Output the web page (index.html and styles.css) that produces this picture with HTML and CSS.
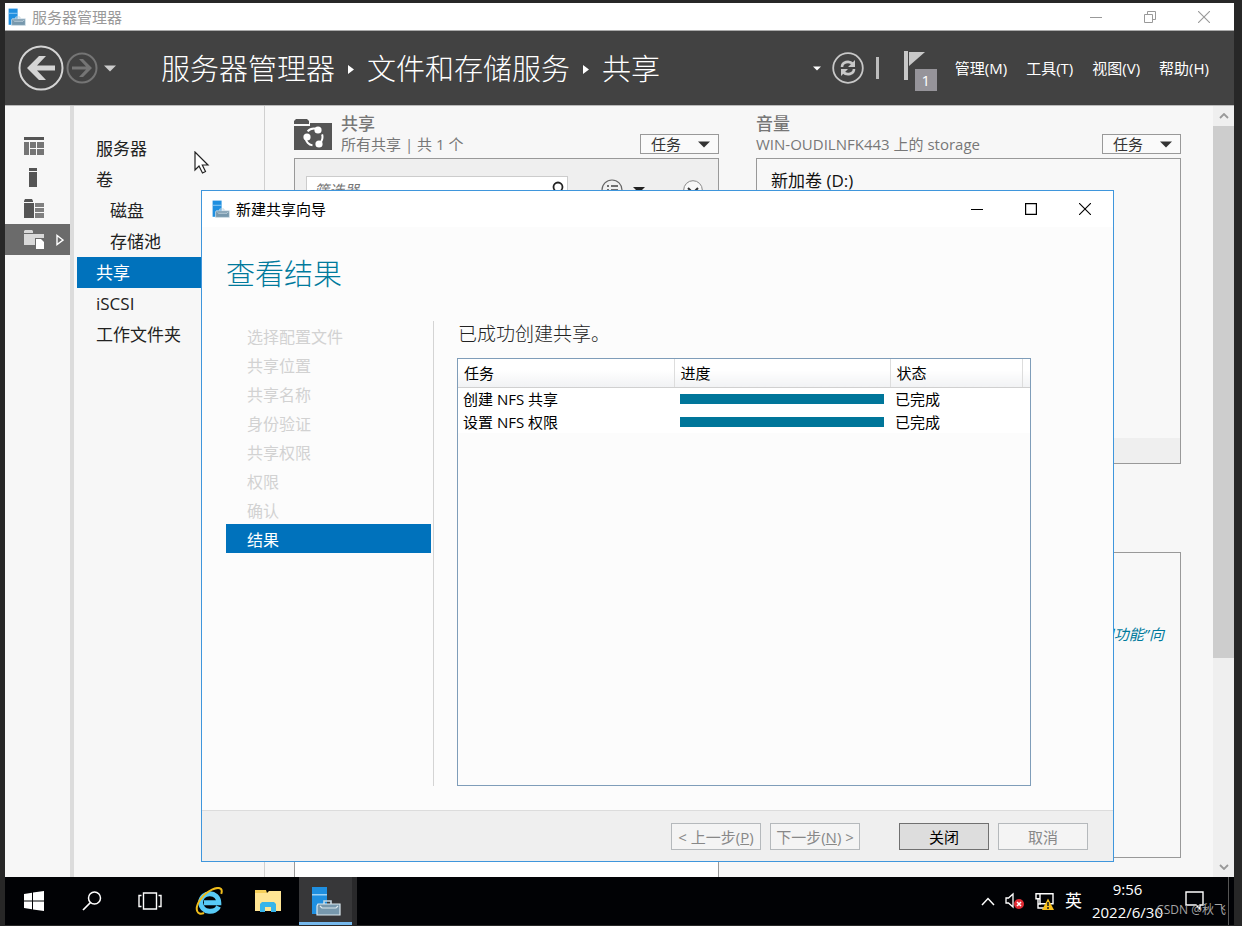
FILE: index.html
```html
<!DOCTYPE html>
<html lang="zh-CN">
<head>
<meta charset="utf-8">
<title>服务器管理器</title>
<link rel="stylesheet" href="styles.css">
</head>
<body>
<svg class="defs" aria-hidden="true">
  <symbol id="server" viewBox="0 0 30 30">
    <path fill="#1f8fe0" d="M1 1h15v27H1z"/>
    <path fill="#9bd0f5" d="M1 8h15v1.500H1z"/>
    <path fill="none" stroke="#c5d6e0" stroke-width="1.600" d="M13 18v-3h7v3"/>
    <path fill="#7798ad" stroke="#dbe7ee" stroke-width="1.200" d="M7 18h22v11H6V20z"/>
    <path fill="none" stroke="#dbe7ee" stroke-width="1.200" d="M9 20l2 2h14l2-2"/>
  </symbol>
  <symbol id="close" viewBox="0 0 12 12"><path fill="none" stroke="currentColor" stroke-width="1.100" d="M0 0l12 12M12 0L0 12"/></symbol>
  <symbol id="minimize" viewBox="0 0 12 12"><path fill="none" stroke="currentColor" d="M0 6.500h12"/></symbol>
  <symbol id="caret" viewBox="0 0 12 6"><path fill="currentColor" d="M0 0h12L6 6z"/></symbol>
</svg>
<div class="screen">
  <header class="titlebar">
    <svg class="app-icon"><use href="#server"/></svg>
    <span class="titlebar-text">服务器管理器</span>
    <div class="window-buttons">
      <button aria-label="最小化"><svg><use href="#minimize"/></svg></button>
      <button aria-label="还原"><svg viewBox="0 0 12 12"><path fill="none" stroke="currentColor" d="M.5 3.500h8v8h-8zM3.500 3V.5h8v8H9"/></svg></button>
      <button aria-label="关闭窗口"><svg><use href="#close"/></svg></button>
    </div>
  </header>

  <div class="banner">
    <button class="back" aria-label="后退"><svg viewBox="0 0 46 46"><circle cx="23" cy="23" r="21.500" fill="none" stroke="#d4d4d4" stroke-width="2"/><path fill="#d4d4d4" d="M9 23L21 11h7l-9 9.500h18v5H19l9 9.500h-7z"/></svg></button>
    <button class="forward" aria-label="前进"><svg viewBox="0 0 32 32"><circle cx="16" cy="16" r="14.500" fill="none" stroke="#757575" stroke-width="2"/><path fill="#757575" d="M26 16l-9 9h-4l7-7.500H6v-3h14L13 7h4z"/></svg></button>
    <button class="history" aria-label="历史记录"><svg><use href="#caret"/></svg></button>
    <nav class="crumbs">
      <a href="#">服务器管理器</a>
      <svg viewBox="0 0 6 9"><path fill="#fff" d="M0 0l6 4.500L0 9z"/></svg>
      <a href="#">文件和存储服务</a>
      <svg viewBox="0 0 6 9"><path fill="#fff" d="M0 0l6 4.500L0 9z"/></svg>
      <a href="#">共享</a>
    </nav>
    <button class="more" aria-label="更多"><svg><use href="#caret"/></svg></button>
    <button class="refresh" aria-label="刷新"><svg viewBox="0 0 32 32"><circle cx="16" cy="16" r="14.800" fill="none" stroke="#c8c8c8" stroke-width="1.800"/><path fill="none" stroke="#c8c8c8" stroke-width="2.600" d="M10 15c0-5 7-7 11-3M22 17c0 5-7 7-11 3"/><path fill="#c8c8c8" d="M23 8v7h-7zM9 24v-7h7z"/></svg></button>
    <span class="bar"></span>
    <button class="flag" aria-label="通知"><svg viewBox="0 0 22 30"><path fill="#c8c8c8" d="M0 0h4v29H0zM5 1h16L5 15z"/></svg><span class="badge">1</span></button>
    <div class="menus">
      <button>管理(M)</button>
      <button>工具(T)</button>
      <button>视图(V)</button>
      <button>帮助(H)</button>
    </div>
  </div>

  <div class="workspace">
    <div class="rail">
      <button aria-label="仪表板"><svg viewBox="0 0 20 20"><path fill="#555" d="M0 0h20v3H0z"/><path fill="#757575" d="M0 5h5v13H0zM6 5h6v6H6zM13 5h7v6h-7zM6 12h6v6H6zM13 12h7v6h-7z"/></svg></button>
      <button aria-label="本地服务器"><svg viewBox="0 0 20 20"><path fill="#555" d="M5 0h8v3H5zM5 4h8v15H5z"/></svg></button>
      <button aria-label="所有服务器"><svg viewBox="0 0 20 20"><path fill="#555" d="M0 2l1-2h7l1 2v1H0zM0 4h10v15H0z"/><path fill="#808080" d="M11 4h9v4h-9zM11 9h9v4h-9zM11 14h9v5h-9z"/></svg></button>
      <button class="active" aria-label="文件和存储服务"><svg viewBox="0 0 20 20"><path fill="#d9d9d9" d="M0 3V1l1-1h7l1 1v2zM0 4h20v4h-9v7H0z"/><path fill="#fff" d="M12 9h5l3 3v7h-8z"/></svg><svg class="expand" viewBox="0 0 8 12"><path fill="none" stroke="#fff" stroke-width="1.400" d="M1 1.500v9L7 6z"/></svg></button>
    </div>
    <nav class="sidenav">
      <a href="#">服务器</a>
      <a href="#">卷</a>
      <a href="#" class="sub">磁盘</a>
      <a href="#" class="sub">存储池</a>
      <a href="#" class="current">共享</a>
      <a href="#">iSCSI</a>
      <a href="#">工作文件夹</a>
    </nav>
    <main class="tiles">
      <section class="tile">
        <div class="tile-head">
          <svg class="share-icon" viewBox="0 0 38 31"><path fill="#555" d="M0 5V2l2-2h11l2 2v3zM0 7h16V4h22v27H0z"/><g fill="none" stroke="#fff" stroke-width="2"><circle cx="20" cy="18" r="8.500" stroke-dasharray="11 6.800" stroke-dashoffset="3"/></g><g fill="#fff"><circle cx="24" cy="11" r="3.600"/><circle cx="13" cy="18" r="3.600"/><circle cx="25" cy="25" r="3.600"/></g></svg>
          <div class="tile-titles"><h2>共享</h2><p>所有共享 | 共 1 个</p></div>
          <button class="tasks">任务<svg><use href="#caret"/></svg></button>
        </div>
        <div class="tile-box list">
          <div class="filter">
            <label class="search"><input type="text" placeholder="筛选器" aria-label="筛选器"><svg viewBox="0 0 14 18"><circle cx="8" cy="6" r="4.500" fill="none" stroke="#222" stroke-width="1.800"/><path stroke="#222" stroke-width="2" d="M5 10l-4 6"/></svg></label>
            <button class="view" aria-label="视图"><svg viewBox="0 0 22 22"><circle cx="11" cy="11" r="10" fill="none" stroke="#666" stroke-width="1.200"/><path stroke="#444" stroke-width="1.500" d="M6 7h2m2 0h7M6 11h2m2 0h7M6 15h2m2 0h7"/></svg></button>
            <button class="view-more" aria-label="视图选项"><svg><use href="#caret"/></svg></button>
            <button class="collapse" aria-label="展开"><svg viewBox="0 0 20 20"><circle cx="10" cy="10" r="9.300" fill="#f8f8f8" stroke="#888"/><path fill="none" stroke="#333" stroke-width="2" d="M5 8l5 5 5-5"/></svg></button>
          </div>
        </div>
      </section>
      <div class="tile-column">
        <section class="tile">
          <div class="tile-head">
            <div class="tile-titles"><h2>音量</h2><p>WIN-OUDILNFK443 上的 storage</p></div>
            <button class="tasks">任务<svg><use href="#caret"/></svg></button>
          </div>
          <div class="tile-box volume"><h3>新加卷 (D:)</h3><div class="tile-foot"></div></div>
        </section>
        <section class="tile-box quota"><p>启动“添加角色和功能”向</p></section>
      </div>
    </main>
    <div class="scrollbar">
      <button aria-label="向上滚动"><svg viewBox="0 0 10 6"><path fill="none" stroke="#999" stroke-width="1.800" d="M1 5l4-4 4 4"/></svg></button>
      <div class="thumb"></div>
      <button class="down" aria-label="向下滚动"><svg viewBox="0 0 10 6"><path fill="none" stroke="#999" stroke-width="1.800" d="M1 1l4 4 4-4"/></svg></button>
    </div>
  </div>

  <div class="dialog" role="dialog" aria-labelledby="wizard-title">
    <div class="dialog-title">
      <svg class="app-icon"><use href="#server"/></svg>
      <span id="wizard-title">新建共享向导</span>
      <div class="window-buttons">
        <button aria-label="最小化"><svg><use href="#minimize"/></svg></button>
        <button aria-label="最大化"><svg viewBox="0 0 12 12"><path fill="none" stroke="currentColor" stroke-width="1.200" d="M.6.6h10.800v10.800H.6z"/></svg></button>
        <button aria-label="关闭窗口"><svg><use href="#close"/></svg></button>
      </div>
    </div>
    <h1>查看结果</h1>
    <div class="dialog-body">
      <ol class="steps">
        <li>选择配置文件</li>
        <li>共享位置</li>
        <li>共享名称</li>
        <li>身份验证</li>
        <li>共享权限</li>
        <li>权限</li>
        <li>确认</li>
        <li class="current">结果</li>
      </ol>
      <div class="result">
        <p>已成功创建共享。</p>
        <div class="grid">
          <table>
            <thead><tr><th>任务</th><th>进度</th><th>状态</th><th class="filler"></th></tr></thead>
            <tbody>
              <tr><td>创建 NFS 共享</td><td><progress value="100" max="100" aria-label="创建 NFS 共享"></progress></td><td colspan="2">已完成</td></tr>
              <tr><td>设置 NFS 权限</td><td><progress value="100" max="100" aria-label="设置 NFS 权限"></progress></td><td colspan="2">已完成</td></tr>
            </tbody>
          </table>
        </div>
      </div>
    </div>
    <div class="dialog-footer">
      <button disabled>&lt; 上一步(<u>P</u>)</button>
      <button disabled>下一步(<u>N</u>) &gt;</button>
      <button class="primary">关闭</button>
      <button disabled>取消</button>
    </div>
  </div>

  <svg class="cursor" viewBox="0 0 16 24"><path fill="#fff" stroke="#222" stroke-width="1.200" d="M1 1v18l4-4 3.500 7 3-1.500L8.300 14H14z"/></svg>

  <footer class="taskbar">
    <button aria-label="开始"><svg width="20" height="20" viewBox="0 0 20 20"><path fill="#fff" d="M0 3l8-1.200V9.500H0zM9 1.600L20 0v9.500H9zM0 10.500h8v7.700L0 17zM9 10.500h11V20L9 18.400z"/></svg></button>
    <button aria-label="搜索"><svg width="20" height="20" viewBox="0 0 20 20"><circle cx="12.500" cy="7" r="6" fill="none" stroke="#fff" stroke-width="1.500"/><path stroke="#fff" stroke-width="1.700" d="M8.500 11.500L1 19"/></svg></button>
    <button aria-label="任务视图"><svg width="24" height="18" viewBox="0 0 24 18"><path fill="none" stroke="#fff" stroke-width="1.400" d="M5.500 1h13v16h-13zM3.500 3.500H1v11h2.500M20.500 3.500H23v11h-2.500"/></svg></button>
    <button aria-label="Internet Explorer"><svg width="28" height="28" viewBox="0 0 28 28"><path fill="none" stroke="#58cbf7" stroke-width="5" d="M23.500 19.500C21 26 7 27 5.500 15.500 6.500 3.500 23.500 4 23.800 15.700H9"/><path fill="none" stroke="#f0bd1c" stroke-width="2" d="M9 26C2 29-1 22 5 13 12 3 23-1 26 2c1.200 1.300.8 3.200.2 4.800"/></svg></button>
    <button aria-label="文件资源管理器"><svg width="26" height="22" viewBox="0 0 26 22"><path fill="#f5cf5a" d="M0 0h11l1 3H0z"/><path fill="#ffe594" d="M0 3h12l2-2h12v20H0z"/><path fill="#38b5ea" d="M5 22v-8l2-2h12l2 2v8h-5v-5h-6v5z"/></svg></button>
    <button class="running" aria-label="服务器管理器"><svg width="30" height="30"><use href="#server"/></svg></button>
    <div class="tray">
      <svg width="14" height="9" viewBox="0 0 14 9"><path fill="none" stroke="#fff" stroke-width="1.500" d="M1 8l6-6.500L13 8"/></svg>
      <svg width="20" height="18" viewBox="0 0 20 18"><path fill="none" stroke="#fff" stroke-width="1.300" d="M1 6h2.500L8 2v13l-4.500-4H1z"/><circle cx="14" cy="12" r="5" fill="#e02b34"/><path stroke="#fff" stroke-width="1.500" d="M12 10l4 4m0-4l-4 4"/></svg>
      <svg width="20" height="18" viewBox="0 0 20 18"><path fill="none" stroke="#fff" stroke-width="1.400" d="M5 1.700h13v10H5zM1 1.700h4v5H1zM3 7v9h6M3 12h3"/><path fill="#f8c01c" d="M13 6.500L19 18H7z"/><path stroke="#222" stroke-width="1.600" d="M13 10v4m0 1v2"/></svg>
      <span class="ime">英</span>
      <div class="clock"><time>9:56</time><time>2022/6/30</time></div>
      <svg width="20" height="20" viewBox="0 0 20 20"><path fill="none" stroke="#fff" stroke-width="1.400" d="M1 1h17v13h-3v4l-4-4H1z"/></svg>
    </div>
    <span class="watermark">CSDN @秋飞</span>
  </footer>
</div>
</body>
</html>
```
FILE: styles.css
```css
* { box-sizing: border-box; }

body {
  margin: 0;
  background: #272727;
  font-family: "Open Sans", "Noto Sans CJK SC", sans-serif;
  font-size: 15px;
  line-height: 20px;
  color: #222;
}

button {
  margin: 0;
  padding: 0;
  border: 0;
  background: none;
  color: inherit;
  font: inherit;
}

a { color: inherit; text-decoration: none; }
h1, h2, h3, p, ol { margin: 0; padding: 0; font-weight: 400; }
svg { display: block; flex: none; }
.defs { width: 0; height: 0; position: absolute; }

.screen {
  position: relative;
  display: flex;
  flex-direction: column;
  height: 100vh;
  padding: 3px 8px 1px 5px;
  overflow: hidden;
}

/* Window title bars */
.titlebar, .dialog-title { display: flex; align-items: center; background: #fff; }
.titlebar { height: 28px; padding: 0 24px 0 3px; border-bottom: 1px solid #aaa; color: #999; flex: none; }
.app-icon { width: 18px; height: 18px; margin-right: 6px; }
.window-buttons { display: flex; gap: 42px; margin-left: auto; }
.window-buttons svg { width: 12px; height: 12px; }

/* Dark banner */
.banner {
  display: flex;
  align-items: center;
  flex: none;
  height: 75px;
  padding: 0 25px 0 13px;
  border-bottom: 1px solid #bbb;
  background: #424242;
  color: #fff;
}
.back svg { width: 46px; height: 46px; }
.forward { margin-left: 2px; }
.forward svg, .refresh svg { width: 32px; height: 32px; }
.history { margin-left: 6px; color: #ccc; }
.history svg { width: 12px; height: 7px; }
.crumbs { display: flex; align-items: center; gap: 13px; margin-left: 45px; padding-top: 2px; font-size: 29px; line-height: 40px; font-weight: 300; white-space: nowrap; }
.crumbs svg { width: 6px; height: 9px; }
.more { margin-left: auto; }
.more svg { width: 8px; height: 5px; }
.refresh { margin-left: 11px; }
.bar { width: 3px; height: 22px; margin-left: 12px; background: #bdbdbd; }
.flag { position: relative; margin-left: 25px; padding: 6px 11px 10px 0; }
.flag svg { width: 22px; height: 30px; }
.badge {
  position: absolute;
  right: 0;
  bottom: 0;
  width: 22px;
  height: 22px;
  background: #96949a;
  line-height: 22px;
  text-align: center;
}
.menus { display: flex; gap: 19px; margin-left: 18px; white-space: nowrap; }

/* Workspace */
.workspace { display: flex; flex: 1; min-height: 0; background: #f7f7f7; overflow: hidden; }
.rail { flex: none; width: 69px; padding-top: 25px; border-right: 4px solid #dcdcdc; }
.rail button { display: flex; align-items: center; width: 100%; height: 31px; padding-left: 19px; }
.rail svg { width: 20px; height: 20px; }
.rail .active { background: #6b6b6b; }
.rail .expand { width: 8px; height: 12px; margin-left: 12px; }
.sidenav { flex: none; width: 191px; padding: 27px 0 0 3px; border-right: 1px solid #d0d0d0; font-size: 17px; }
.sidenav a { display: block; height: 31px; padding-left: 19px; line-height: 31px; }
.sidenav .sub { padding-left: 33px; }
.sidenav .current { background: #0072bc; color: #fff; }

.tiles { display: grid; grid-template-columns: 1fr 1fr; gap: 37px; flex: 1; min-width: 0; padding: 0 32px 0 29px; }
.tile { display: flex; flex-direction: column; }
.tile-head { display: flex; align-items: flex-end; height: 52px; padding-bottom: 4px; color: #777; }
.share-icon { width: 38px; height: 31px; margin: 0 9px 4px 0; }
.tile-titles { flex: 1; min-width: 0; height: 42px; white-space: nowrap; }
.tile-titles h2 { padding-top: 2px; font-size: 17px; font-weight: 500; line-height: 20px; }
.tasks { display: flex; align-items: center; justify-content: space-between; width: 79px; height: 20px; padding: 0 8px 0 10px; border: 1px solid #999; background: #fafafa; color: #333; }
.tasks svg { width: 12px; height: 7px; }
.tile-box { border: 1px solid #999; background: #f8f8f8; }
.list { flex: 1; background: #fff; border-bottom: 0; }
.filter { display: flex; align-items: center; padding: 17px 15px 14px 11px; background: #efefef; }
.search { display: flex; align-items: center; width: 262px; height: 28px; padding: 0 3px 0 7px; border: 1px solid #ccc; background: #fff; }
.search input { flex: 1; min-width: 0; padding: 0; border: 0; background: none; font: inherit; font-style: italic; }
.search svg { width: 14px; height: 18px; }
.view { margin-left: 33px; }
.view svg { width: 22px; height: 22px; }
.view-more { margin-left: 10px; color: #222; }
.view-more svg { width: 12px; height: 6px; }
.collapse { margin-left: auto; }
.collapse svg { width: 20px; height: 20px; }
.tile-column { display: flex; flex-direction: column; gap: 88px; }
.volume { display: flex; flex-direction: column; height: 306px; }
.volume h3 { padding: 11px 14px; font-size: 17px; line-height: 21px; color: #111; }
.tile-foot { height: 25px; margin-top: auto; background: #efefef; }
.quota { height: 306px; padding: 71px 16px; color: #007a9c; font-style: italic; text-align: right; white-space: nowrap; }

.scrollbar { display: flex; flex-direction: column; flex: none; width: 21px; background: #efefef; }
.scrollbar button { display: grid; place-items: center; height: 20px; flex: none; }
.scrollbar svg { width: 10px; height: 6px; }
.scrollbar .down { margin-top: auto; }
.thumb { flex: 0 1 532px; background: #cdcdcd; }

/* Wizard window floating over the workspace */
.dialog {
  position: absolute;
  top: 190px;
  right: 128px;
  bottom: 64px;
  left: 201px;
  display: flex;
  flex-direction: column;
  border: 1px solid #3f96dc;
  background: #fcfcfc;
}
.dialog-title { flex: none; height: 36px; padding: 0 22px 0 10px; color: #000; }
.dialog h1 { flex: none; margin: 27px 24px 0; font-size: 29px; font-weight: 300; line-height: 40px; color: #007a9c; }
.dialog-body { display: flex; flex: 1; min-height: 0; padding: 27px 82px 24px 24px; }
.steps { flex: none; width: 208px; padding-right: 2px; border-right: 1px solid #d4d4d4; list-style: none; font-size: 16px; color: #d2d2d2; }
.steps li { height: 29px; padding: 2px 21px 0; line-height: 29px; }
.steps .current { background: #0072bc; color: #fff; }
.result { display: flex; flex-direction: column; flex: 1; min-width: 0; padding: 1px 0 0 23px; }
.result p { font-size: 19px; font-weight: 300; line-height: 24px; padding: 0 0 12px 1px; }
.grid { flex: 1; border: 1px solid #7f9db9; }
.grid table { width: 100%; border-collapse: collapse; table-layout: fixed; color: #000; background: #fff; }
.grid th { width: 216px; height: 28px; padding: 0 6px; border-right: 1px solid #ddd; border-bottom: 1px solid #d0d0d0; background: linear-gradient(#fff 40%, #f1f2f4); font-weight: 400; text-align: left; }
.grid th:nth-child(3) { width: auto; }
.grid th.filler { width: 8px; padding: 0; border-right: 0; }
.grid td { height: 23px; padding: 0 5px; line-height: 22px; }
.grid td:nth-child(2) { padding: 0 6px; }
.grid progress { display: block; width: 100%; height: 10px; border: 0; appearance: none; background: #00769a; }
.grid progress::-webkit-progress-bar { background: #ddd; }
.grid progress::-webkit-progress-value { background: #00769a; }

.dialog-footer { display: flex; justify-content: flex-end; gap: 9px; flex: none; padding: 12px 25px 11px 24px; border-top: 1px solid #dcdcdc; background: #efefef; }
.dialog-footer button { width: 90px; height: 27px; border: 1px solid #b5b9bc; background: #f4f4f4; color: #888; white-space: nowrap; }
.dialog-footer .primary { margin-left: 30px; border-color: #707070; background: #ddd; color: #000; }

.cursor { position: absolute; left: 194px; top: 151px; width: 16px; height: 24px; }

/* Taskbar */
.taskbar { position: relative; display: flex; flex: none; height: 48px; background: #010205; color: #fff; }
.taskbar button { display: grid; place-items: center; flex: none; width: 58px; }
.taskbar button:nth-child(4), .taskbar button:nth-child(5) { width: 59px; }
.taskbar .running { margin-left: 2px; border-right: 5px solid #29292b; background: #373739; box-shadow: inset 0 -3px #76b9ed; }
.tray { display: flex; align-items: center; gap: 10px; margin-left: auto; padding-right: 23px; margin-right: 5px; border-right: 1px solid #555; }
.ime { font-size: 17px; }
.clock { display: flex; flex-direction: column; align-items: center; margin-right: 12px; line-height: 23px; }
.watermark { position: absolute; right: 8px; bottom: 6px; font-size: 12px; line-height: 18px; color: #a5a5a5; }
```
